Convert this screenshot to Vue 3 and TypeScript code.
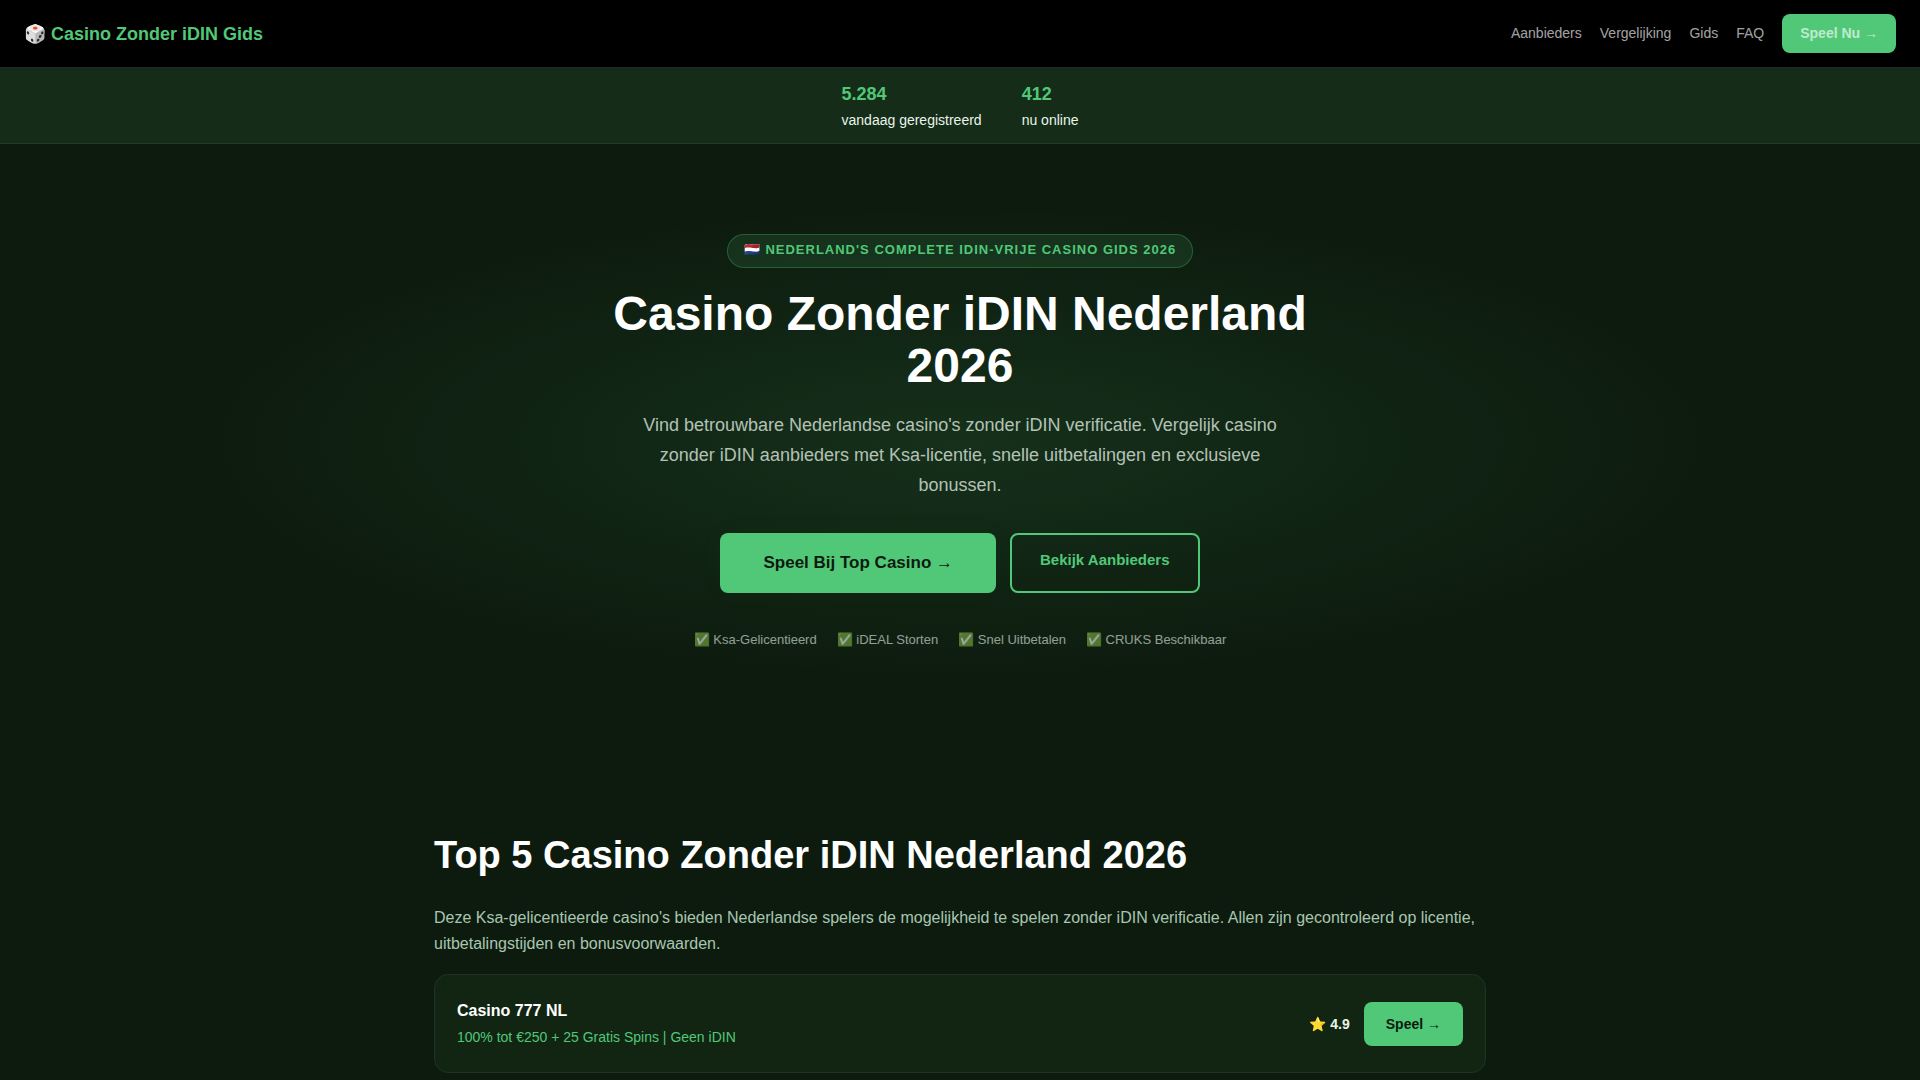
<script setup lang="ts">
interface NavLink {
  label: string
  href: string
}

interface Stat {
  value: string
  label: string
}

interface Casino {
  name: string
  bonus: string
  rating: string
}

const navLinks: NavLink[] = [
  { label: 'Aanbieders', href: '#aanbieders' },
  { label: 'Vergelijking', href: '#vergelijking' },
  { label: 'Gids', href: '#gids' },
  { label: 'FAQ', href: '#faq' },
]

const stats: Stat[] = [
  { value: '5.284', label: 'vandaag geregistreerd' },
  { value: '412', label: 'nu online' },
]

const trustItems: string[] = [
  'Ksa-Gelicentieerd',
  'iDEAL Storten',
  'Snel Uitbetalen',
  'CRUKS Beschikbaar',
]

const casinos: Casino[] = [
  { name: 'Casino 777 NL', bonus: '100% tot €250 + 25 Gratis Spins | Geen iDIN', rating: '4.9' },
]
</script>

<template>
  <div class="page">
    <header class="site-header">
      <a class="logo" href="#">🎲 Casino Zonder iDIN Gids</a>
      <nav class="nav">
        <a v-for="link in navLinks" :key="link.label" class="nav-link" :href="link.href">{{ link.label }}</a>
        <a class="nav-link nav-cta" href="#speel">Speel Nu →</a>
      </nav>
    </header>

    <div class="stats">
      <div v-for="stat in stats" :key="stat.label" class="stat">
        <strong class="stat-value">{{ stat.value }}</strong>
        <span class="stat-label">{{ stat.label }}</span>
      </div>
    </div>

    <main>
      <section class="hero">
        <div class="badge">🇳🇱 Nederland's complete iDIN-vrije casino gids 2026</div>
        <h1 class="title">Casino Zonder iDIN Nederland 2026</h1>
        <p class="lead">
          Vind betrouwbare Nederlandse casino's zonder iDIN verificatie. Vergelijk casino zonder iDIN
          aanbieders met Ksa-licentie, snelle uitbetalingen en exclusieve bonussen.
        </p>
        <div class="actions">
          <a class="btn-primary" href="#speel">Speel Bij Top Casino →</a>
          <a class="btn-outline" href="#aanbieders">Bekijk Aanbieders</a>
        </div>
        <div class="trust">
          <span v-for="item in trustItems" :key="item">✅ {{ item }}</span>
        </div>
      </section>

      <section id="aanbieders" class="section">
        <h2 class="section-title">Top 5 Casino Zonder iDIN Nederland 2026</h2>
        <p class="section-text">
          Deze Ksa-gelicentieerde casino's bieden Nederlandse spelers de mogelijkheid te spelen zonder
          iDIN verificatie. Allen zijn gecontroleerd op licentie, uitbetalingstijden en
          bonusvoorwaarden.
        </p>
        <article v-for="casino in casinos" :key="casino.name" class="card">
          <div class="card-info">
            <h3 class="card-name">{{ casino.name }}</h3>
            <div class="card-bonus">{{ casino.bonus }}</div>
          </div>
          <div class="card-side">
            <span class="card-rating">⭐ {{ casino.rating }}</span>
            <a class="card-cta" href="#speel">Speel →</a>
          </div>
        </article>
      </section>
    </main>
  </div>
</template>

<style>
body {
  margin: 0;
  background: #0d1b0e;
}
</style>

<style scoped>
.page {
  min-height: 100vh;
  background: #0d1b0e;
  color: #e8f5e9;
  font-family: "Liberation Sans", Arial, sans-serif;
  font-size: 16px;
  line-height: 26px;
}

.page a {
  text-decoration: none;
}

.site-header {
  display: flex;
  align-items: center;
  justify-content: space-between;
  padding: 14px 24px;
  background: #000;
  border-bottom: 1px solid #1d2c20;
}

.logo {
  color: #50c878;
  font-size: 18px;
  font-weight: 700;
}

.nav {
  display: flex;
  align-items: center;
  gap: 18px;
}

.nav-link {
  color: rgba(255, 255, 255, 0.65);
  font-size: 14px;
  line-height: 23px;
}

.nav-cta {
  padding: 8px 18px;
  border-radius: 8px;
  background: #50c878;
  font-weight: 700;
}

.stats {
  display: flex;
  justify-content: center;
  gap: 40px;
  padding: 12px 24px 10px;
  background: #152c19;
  border-bottom: 1px solid #233d28;
}

.stat {
  display: flex;
  flex-direction: column;
}

.stat-value {
  color: #50c878;
  font-size: 18px;
  line-height: 28px;
}

.stat-label {
  font-size: 14px;
  line-height: 25px;
}

.hero {
  display: flex;
  flex-direction: column;
  align-items: center;
  padding: 90px 24px;
  background: radial-gradient(ellipse at center, rgba(80, 200, 120, 0.12) 0%, transparent 56%);
  text-align: center;
}

.badge {
  padding: 5px 16px 7px;
  border: 1px solid rgba(80, 200, 120, 0.3);
  border-radius: 20px;
  background: rgba(80, 200, 120, 0.12);
  color: #50c878;
  font-size: 13px;
  font-weight: 700;
  letter-spacing: 1px;
  line-height: 20px;
  text-transform: uppercase;
}

.title {
  max-width: 800px;
  margin: 20px 0 18px;
  color: #fff;
  font-size: 48px;
  font-weight: 700;
  line-height: 52px;
}

.lead {
  max-width: 640px;
  margin: 0 0 33px;
  color: rgba(232, 245, 233, 0.75);
  font-size: 18px;
  line-height: 30px;
}

.actions {
  display: flex;
  flex-wrap: wrap;
  justify-content: center;
  gap: 14px;
}

.btn-primary {
  padding: 16px 43px;
  border-radius: 8px;
  background: #50c878;
  box-shadow: 0 0 30px rgba(80, 200, 120, 0.03);
  color: #0d1b0e;
  font-size: 17px;
  font-weight: 700;
  line-height: 28px;
}

.btn-outline {
  padding: 12px 28px;
  border: 2px solid #50c878;
  border-radius: 8px;
  color: #50c878;
  font-size: 15px;
  font-weight: 700;
}

.trust {
  display: flex;
  flex-wrap: wrap;
  justify-content: center;
  gap: 20px;
  margin-top: 36px;
  font-size: 13px;
  line-height: 22px;
  opacity: 0.6;
}

.section {
  max-width: 1052px;
  margin: 0 auto;
  padding: 90px 24px;
}

.section-title {
  margin: 0 0 26px;
  color: #fff;
  font-size: 38px;
  font-weight: 700;
  line-height: 48px;
}

.section-text {
  margin: 0 0 17px;
  color: rgba(200, 230, 210, 0.85);
  font-size: 16px;
}

.card {
  display: flex;
  align-items: center;
  justify-content: space-between;
  gap: 16px;
  margin-bottom: 12px;
  padding: 22px;
  border: 1px solid #1e3322;
  border-radius: 14px;
  background: #122513;
}

.card-name {
  margin: 0;
  color: #fff;
  font-size: 16px;
  font-weight: 700;
  line-height: 28px;
}

.card-bonus {
  color: #50c878;
  font-size: 14px;
  line-height: 25px;
}

.card-side {
  display: flex;
  align-items: center;
  gap: 14px;
}

.card-rating {
  font-size: 14px;
  font-weight: 700;
}

.card-cta {
  padding: 9px 22px;
  border-radius: 8px;
  background: #50c878;
  color: #0d1b0e;
  font-size: 14px;
  font-weight: 700;
}
</style>
